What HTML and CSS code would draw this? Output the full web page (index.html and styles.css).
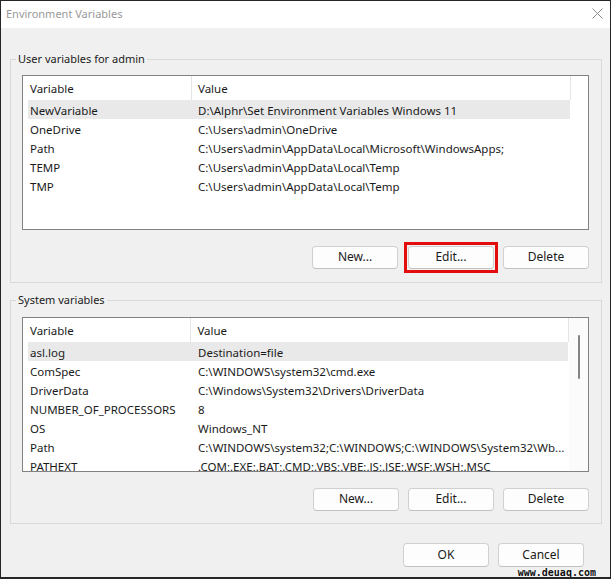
FILE: index.html
```html
<!DOCTYPE html>
<html>
<head>
<meta charset="utf-8">
<link rel="stylesheet" href="styles.css">
</head>
<body>
<div class="window">
  <div class="titlebar">
    <span class="title">Environment Variables</span>
    <svg class="close" width="11" height="11" viewBox="0 0 11 11"><path d="M0.5 0.5 L10.5 10.5 M10.5 0.5 L0.5 10.5" stroke="#8c8c8c" stroke-width="1" fill="none"/></svg>
  </div>
  <div class="content">
    <div class="group">
      <div class="group-title">User variables for admin</div>
      <div class="list">
        <div class="list-main">
          <div class="header">
            <div class="hcell hname">Variable</div>
            <div class="hcell hvalue">Value</div>
          </div>
          <div class="row selected"><span class="name">NewVariable</span><span class="value">D:\Alphr\Set Environment Variables Windows 11</span></div>
          <div class="row"><span class="name">OneDrive</span><span class="value">C:\Users\admin\OneDrive</span></div>
          <div class="row"><span class="name">Path</span><span class="value">C:\Users\admin\AppData\Local\Microsoft\WindowsApps;</span></div>
          <div class="row"><span class="name">TEMP</span><span class="value">C:\Users\admin\AppData\Local\Temp</span></div>
          <div class="row"><span class="name">TMP</span><span class="value">C:\Users\admin\AppData\Local\Temp</span></div>
        </div>
      </div>
      <div class="buttons">
        <button class="btn">New...</button>
        <span class="highlight-box"><button class="btn">Edit...</button></span>
        <button class="btn">Delete</button>
      </div>
    </div>
    <div class="group second">
      <div class="group-title">System variables</div>
      <div class="list">
        <div class="list-main">
          <div class="header">
            <div class="hcell hname">Variable</div>
            <div class="hcell hvalue">Value</div>
          </div>
          <div class="row selected"><span class="name">asl.log</span><span class="value">Destination=file</span></div>
          <div class="row"><span class="name">ComSpec</span><span class="value">C:\WINDOWS\system32\cmd.exe</span></div>
          <div class="row"><span class="name">DriverData</span><span class="value">C:\Windows\System32\Drivers\DriverData</span></div>
          <div class="row"><span class="name">NUMBER_OF_PROCESSORS</span><span class="value">8</span></div>
          <div class="row"><span class="name">OS</span><span class="value">Windows_NT</span></div>
          <div class="row"><span class="name">Path</span><span class="value">C:\WINDOWS\system32;C:\WINDOWS;C:\WINDOWS\System32\Wb...</span></div>
          <div class="row"><span class="name">PATHEXT</span><span class="value">.COM;.EXE;.BAT;.CMD;.VBS;.VBE;.JS;.JSE;.WSF;.WSH;.MSC</span></div>
        </div>
        <div class="scrollbar"><div class="thumb"></div></div>
      </div>
      <div class="buttons">
        <button class="btn">New...</button>
        <button class="btn">Edit...</button>
        <button class="btn">Delete</button>
      </div>
    </div>
    <div class="footer">
      <button class="btn tall">OK</button>
      <button class="btn tall">Cancel</button>
    </div>
  </div>
  <div class="watermark">www.deuaq.com</div>
</div>
</body>
</html>
```
FILE: styles.css
```css
html, body {
  margin: 0;
  padding: 0;
  background: #f0f0f0;
}
.window {
  position: relative;
  width: 611px;
  height: 579px;
  box-sizing: border-box;
  border: 1px solid #262626;
  border-bottom-width: 2px;
  background: #f0f0f0;
  font-family: "Noto Sans", "Open Sans", sans-serif;
  font-size: 11.5px;
  color: #1a1a1a;
  display: flex;
  flex-direction: column;
  overflow: hidden;
}
.titlebar {
  height: 27px;
  background: #ffffff;
  display: flex;
  align-items: center;
  justify-content: space-between;
  padding: 0 7px 0 5px;
  flex-shrink: 0;
}
.title {
  color: #9a9a9a;
  font-size: 11px;
  margin-top: -2px;
}
.close {
  margin-top: -3px;
}
.content {
  display: flex;
  flex-direction: column;
  padding: 0 0 0 9px;
}
.group {
  width: 592px;
  box-sizing: border-box;
  border: 1px solid #d9d9d9;
  margin-top: 31px;
  padding: 0 12px 13px 11px;
}
.group.second {
  margin-top: 17px;
  padding-bottom: 12px;
}
.group-title {
  width: fit-content;
  margin-top: -10px;
  margin-left: -6px;
  padding: 0 2px;
  background: #f0f0f0;
  line-height: 17px;
  height: 17px;
  font-size: 11px;
}
.list {
  margin-top: 8px;
  height: 155px;
  box-sizing: border-box;
  border: 1px solid #828282;
  background: #ffffff;
  display: flex;
  overflow: hidden;
}
.second .list {
  margin-top: 9px;
}
.list-main {
  flex: 1;
  overflow: hidden;
}
.header {
  display: flex;
  height: 24px;
  align-items: stretch;
}
.hcell {
  box-sizing: border-box;
  border-right: 1px solid #e5e5e5;
  display: flex;
  align-items: center;
}
.hname {
  width: 169px;
  padding-left: 7px;
}
.hvalue {
  width: 379px;
  padding-left: 6px;
}
.row {
  display: flex;
  align-items: center;
  height: 19px;
  box-sizing: border-box;
  padding-top: 1px;
  width: 542px;
  margin-left: 5px;
  white-space: nowrap;
}
.second .row {
  width: 540px;
}
.row.selected {
  background: #e9e9e9;
}
.name {
  width: 170px;
  box-sizing: border-box;
  padding-left: 2px;
  flex-shrink: 0;
}
.scrollbar {
  width: 19px;
  background: #fbfbfb;
  display: flex;
  justify-content: center;
  flex-shrink: 0;
}
.thumb {
  width: 2px;
  height: 44px;
  margin-top: 17px;
  background: #858585;
  border-radius: 1px;
}
.buttons {
  display: flex;
  justify-content: flex-end;
  align-items: flex-start;
  gap: 9px;
  margin-top: 16px;
}
.second .buttons {
  margin-top: 16px;
}
.highlight-box {
  display: block;
  border: 3px solid #e30d0d;
  padding: 1px;
  margin: -4px -4px -4px -3px;
  line-height: 0;
}
.btn {
  width: 86px;
  height: 23px;
  box-sizing: border-box;
  border: 1px solid #d0d0d0;
  border-bottom-color: #c2c2c2;
  border-radius: 4px;
  background: #fdfdfd;
  font-family: "Noto Sans", "Open Sans", sans-serif;
  font-size: 12px;
  color: #1a1a1a;
  padding: 0 0 2px 0;
  margin: 0;
}
.btn.tall {
  height: 24px;
}
.footer {
  display: flex;
  justify-content: flex-end;
  gap: 9px;
  margin-top: 19px;
  padding-right: 26px;
}
.watermark {
  position: absolute;
  right: 14px;
  bottom: -1px;
  font-family: "DejaVu Sans Mono", monospace;
  font-size: 10px;
  font-weight: bold;
  color: #111;
  text-shadow: 0 0 2px #fff, 0 0 2px #fff;
}
```
